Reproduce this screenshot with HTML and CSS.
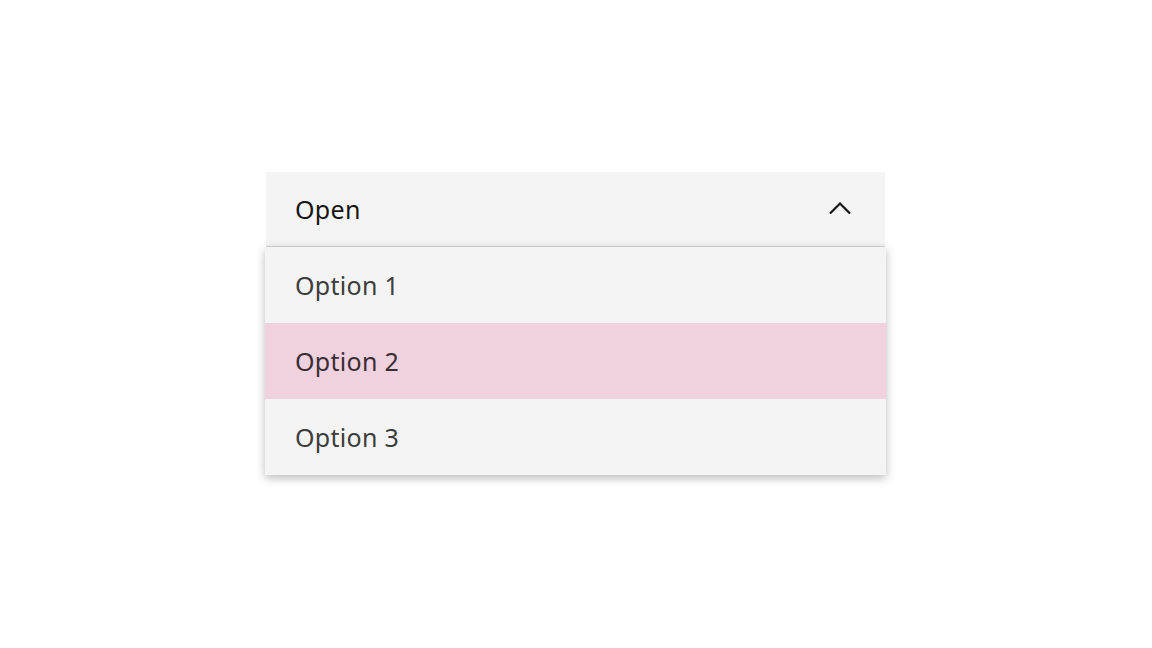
FILE: index.html
```html
<!DOCTYPE html>
<html>
<head>
<meta charset="utf-8">
<link rel="stylesheet" href="styles.css">
</head>
<body>
<div class="page">
  <div class="dropdown">
    <div class="field">
      <span class="label">Open</span>
      <svg class="chevron" width="22" height="14" viewBox="0 0 22 14"><path d="M1 12.5 L11 2.5 L21 12.5" fill="none" stroke="#161616" stroke-width="2.2"/></svg>
    </div>
    <div class="menu">
      <div class="item">Option 1</div>
      <div class="item active">Option 2</div>
      <div class="item">Option 3</div>
    </div>
  </div>
</div>
</body>
</html>
```
FILE: styles.css
```css
html, body {
  margin: 0;
  padding: 0;
  background: #ffffff;
}
.page {
  padding-top: 172px;
  padding-left: 265px;
  min-height: 648px;
  box-sizing: border-box;
}
.dropdown {
  width: 621px;
  font-family: "Noto Sans", "DejaVu Sans", sans-serif;
}
.field {
  margin-left: 1px;
  width: 619px;
  height: 75px;
  box-sizing: border-box;
  background: #f4f4f4;
  border-bottom: 1px solid #d6d6d6;
  display: flex;
  align-items: center;
  justify-content: space-between;
  padding: 0 34px 0 29px;
}
.label {
  font-size: 25px;
  color: #161616;
  letter-spacing: 0.3px;
}
.chevron {
  display: block;
  margin-top: -2px;
}
.menu {
  background: #f4f4f4;
  box-shadow: 0 3px 9px rgba(0, 0, 0, 0.28);
}
.item {
  height: 76px;
  display: flex;
  align-items: center;
  padding-left: 30px;
  font-size: 25px;
  color: #3d3d3d;
  letter-spacing: 0.3px;
}
.item.active {
  background: #f0d1de;
  color: #3a2e35;
}
```
